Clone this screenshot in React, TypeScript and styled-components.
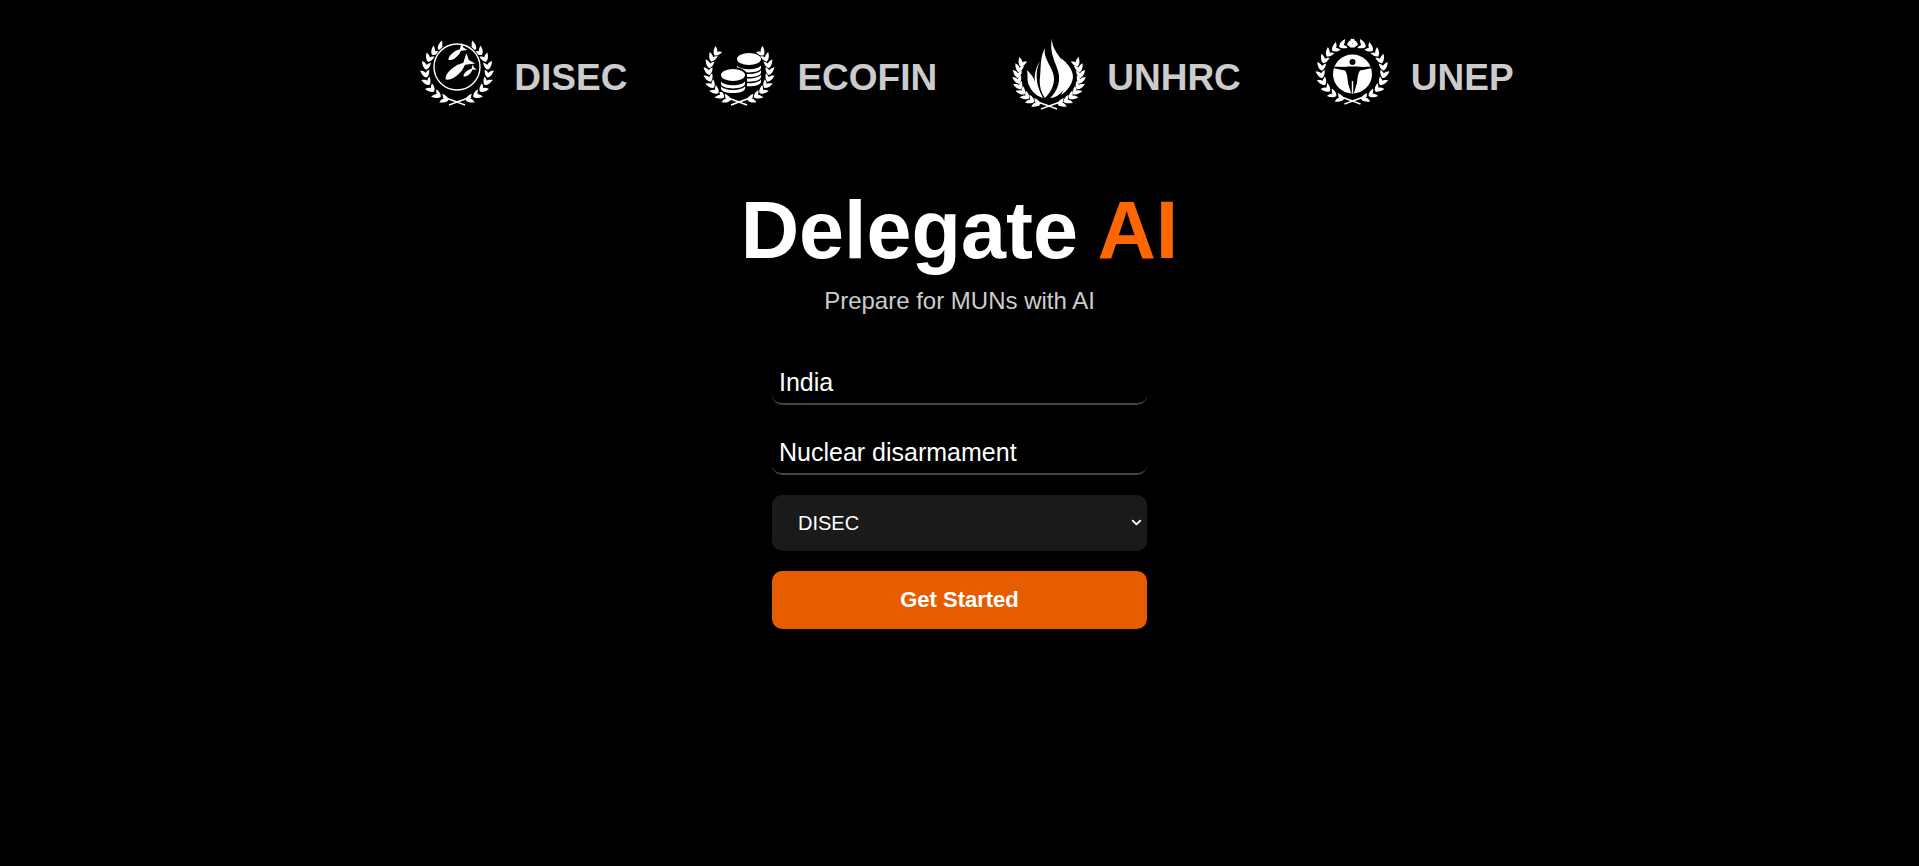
import React from "react";
import styled, { createGlobalStyle } from "styled-components";
import { ChevronDown } from "lucide-react";

const Global = createGlobalStyle`
  html, body { margin: 0; padding: 0; background: #000; }
  body { font-family: "Liberation Sans", Arial, sans-serif; color: #fff; }
`;

const Page = styled.div`
  min-height: 866px;
  background: #000;
  display: flex;
  flex-direction: column;
  align-items: center;
  box-sizing: border-box;
  padding-top: 33px;
`;

const Nav = styled.nav`
  display: flex;
  justify-content: center;
  gap: 74px;
  padding-left: 13px;
`;

const NavItem = styled.a`
  display: flex;
  align-items: center;
  gap: 16px;
  color: #ccc;
  font-size: 37px;
  font-weight: 700;
  text-decoration: none;
`;

const NavLabel = styled.span`
  padding-top: 10px;
`;

const Logo = styled.svg`
  width: 80px;
  height: 80px;
  display: block;
  flex: none;
`;

const Title = styled.h1`
  margin: 69px 0 0;
  font-size: 80.9px;
  line-height: 96px;
  font-weight: 700;
  color: #fff;
`;

const Accent = styled.span`
  color: #ff6600;
`;

const Subtitle = styled.p`
  margin: 9px 0 0;
  font-size: 24px;
  line-height: 28px;
  color: #ccc;
`;

const Form = styled.form`
  width: 375px;
  margin-top: 40px;
  display: flex;
  flex-direction: column;
  gap: 20px;
`;

const TextField = styled.input`
  box-sizing: border-box;
  width: 100%;
  height: 50px;
  padding: 6px 7px 0;
  background: #000;
  border: none;
  border-bottom: 2px solid #444;
  border-radius: 10px;
  color: #fff;
  font: 400 25px "Liberation Sans", Arial, sans-serif;
  outline: none;
`;

const SelectBox = styled.div`
  position: relative;
  height: 56px;
`;

const Select = styled.select`
  box-sizing: border-box;
  display: block;
  width: 100%;
  height: 100%;
  padding: 0 20px 0 26px;
  appearance: none;
  background: #1a1a1a;
  border: none;
  border-radius: 10px;
  color: #fff;
  font: 400 20px "Liberation Sans", Arial, sans-serif;
  outline: none;
`;

const SelectArrow = styled(ChevronDown)`
  position: absolute;
  right: 3px;
  top: 20px;
  width: 15px;
  height: 15px;
  color: #fff;
  stroke-width: 3;
  pointer-events: none;
`;

const Button = styled.button`
  box-sizing: border-box;
  width: 100%;
  height: 58px;
  background: #e65c00;
  border: none;
  border-radius: 10px;
  color: #fff;
  font: 700 22px "Liberation Sans", Arial, sans-serif;
`;

const leaf = (l: number, w: number) =>
  `M0 0 C${l * 0.2} ${-w} ${l * 0.6} ${-w} ${l} 0 C${l * 0.6} ${w * 0.5} ${l * 0.2} ${w * 0.5} 0 0Z`;

type WreathProps = {
  cx: number;
  cy: number;
  rx: number;
  ry: number;
  end?: number;
  steps?: number;
};

/* One laurel branch per side, running from the crossing at the bottom up the ring. */
const Wreath = ({ cx, cy, rx, ry, end = 140, steps = 9 }: WreathProps) => {
  const leaves: React.ReactNode[] = [];
  [1, -1].forEach((side) => {
    for (let i = 0; i < steps; i++) {
      const deg = 16 + (i * (end - 16)) / (steps - 1);
      const a = (deg * Math.PI) / 180;
      const x = cx + side * rx * Math.sin(a);
      const y = cy + ry * Math.cos(a);
      const tangent = Math.atan2(-ry * Math.sin(a), side * rx * Math.cos(a));
      const t = (tangent * 180) / Math.PI;
      const flip = side === 1 ? "" : " scale(1 -1)";
      leaves.push(
        <path
          key={`o${side}${i}`}
          d={leaf(9.5, 3.4)}
          transform={`translate(${x} ${y}) rotate(${t + side * 30})${flip}`}
        />,
        <path
          key={`i${side}${i}`}
          d={leaf(8.5, -3)}
          transform={`translate(${x} ${y}) rotate(${t - side * 30})${flip}`}
        />,
      );
    }
  });
  const by = cy + ry;
  return (
    <g fill="#fff">
      <path
        d={`M${cx + rx * 0.45} ${by - 4} Q${cx} ${by + 1} ${cx - 8} ${by + 4} M${cx - rx * 0.45} ${by - 4} Q${cx} ${by + 1} ${cx + 8} ${by + 4}`}
        fill="none"
        stroke="#fff"
        strokeWidth="1.8"
      />
      {leaves}
    </g>
  );
};

const Bomb = ({ x, y, len, w }: { x: number; y: number; len: number; w: number }) => (
  <path
    transform={`translate(${x} ${y}) rotate(-40)`}
    d={`M0 0 C${len * 0.12} ${-w} ${len * 0.3} ${-w} ${len * 0.55} ${-w * 0.8} L${len * 0.74} ${-w * 0.3} L${len} ${-w * 1.5} L${len * 0.92} 0 L${len} ${w * 1.5} L${len * 0.74} ${w * 0.3} L${len * 0.55} ${w * 0.8} C${len * 0.3} ${w} ${len * 0.12} ${w} 0 0Z`}
  />
);

const DisecLogo = () => (
  <Logo viewBox="0 0 80 80" aria-hidden="true">
    <Wreath cx={39} cy={39} rx={31} ry={29} end={142} />
    <circle cx="39" cy="34" r="24.5" fill="#000" />
    <circle cx="39" cy="34" r="23" fill="#000" stroke="#fff" strokeWidth="1.4" />
    <g fill="#fff">
      <Bomb x={27.5} y={46.5} len={33} w={4.6} />
      <Bomb x={30.5} y={27} len={21} w={3} />
      <Bomb x={45.5} y={43.5} len={15} w={2.2} />
    </g>
  </Logo>
);

const Coins = ({ x, y, n }: { x: number; y: number; n: number }) => {
  const rows = [];
  for (let i = n - 1; i > 0; i--) {
    const oy = y + 4 + i * 4.6;
    rows.push(
      <path
        key={i}
        d={`M${x - 12} ${oy - 2} V${oy} C${x - 12} ${oy + 6.5} ${x + 12} ${oy + 6.5} ${x + 12} ${oy} V${oy - 2} C${x + 8} ${oy + 3} ${x - 8} ${oy + 3} ${x - 12} ${oy - 2}Z`}
        fill="#fff"
      />,
    );
  }
  return (
    <g>
      {rows}
      <ellipse cx={x} cy={y} rx="12" ry="6" fill="#fff" />
    </g>
  );
};

const EcofinLogo = () => (
  <Logo viewBox="0 0 80 80" aria-hidden="true">
    <Wreath cx={38} cy={39} rx={30} ry={29} end={125} />
    <Coins x={48} y={26} n={5} />
    <ellipse cx="32" cy="42" rx="14" ry="8" fill="#000" />
    <rect x="18" y="42" width="28" height="17" fill="#000" />
    <Coins x={32} y={42} n={3} />
  </Logo>
);

const UnhrcLogo = () => (
  <Logo viewBox="0 0 80 80" aria-hidden="true">
    <Wreath cx={38} cy={44} rx={31} ry={28} end={112} />
    <g fill="#fff">
      <path d="M41 5 C40 15 48 22 55 33 C61 43 58 55 46 63 C44 64 41 65 39 65 C47 58 50 47 47 38 C44 28 38 19 41 5Z" />
      <path d="M34 15 C32 24 39 31 42 40 C45 49 41 58 34 65 C30 60 28 52 29 44 C30 33 29 24 34 15Z" />
      <path d="M29 28 C25 36 25 45 27 53 C28 57 30 61 32 65 C25 63 20 58 17 50 C16 46 17 42 16 37 C20 41 23 45 24 49 C23 42 25 34 29 28Z" />
      <path d="M50 25 C55 29 62 36 62 44 C61 52 56 58 50 62 C55 53 57 44 54 36 C53 33 51 29 50 25Z" />
    </g>
  </Logo>
);

const UnepLogo = () => (
  <Logo viewBox="0 0 80 80" aria-hidden="true">
    <Wreath cx={37.5} cy={39} rx={31} ry={28} end={170} steps={11} />
    <circle cx="37.5" cy="41" r="21" fill="#000" />
    <circle cx="37.5" cy="41" r="19.5" fill="#fff" />
    <g fill="#000">
      <circle cx="37.5" cy="29" r="3" />
      <path d="M18 33.5 C25 34 30 34 33 33.5 L42 33.5 C45 34 50 34 57 33.5 L57 35 C52 36 48 37 45 37.5 C43 40 42.5 44 42 50 L39 60 L38.2 60 L38.2 48 L36.8 48 L36.8 60 L36 60 L33 50 C32.5 44 32 40 30 37.5 C27 37 23 36 18 35Z" />
    </g>
  </Logo>
);

const items = [
  { name: "DISEC", logo: <DisecLogo /> },
  { name: "ECOFIN", logo: <EcofinLogo /> },
  { name: "UNHRC", logo: <UnhrcLogo /> },
  { name: "UNEP", logo: <UnepLogo /> },
];

export default function App() {
  return (
    <Page>
      <Global />
      <Nav>
        {items.map((item) => (
          <NavItem key={item.name}>
            {item.logo}
            <NavLabel>{item.name}</NavLabel>
          </NavItem>
        ))}
      </Nav>
      <Title>
        Delegate <Accent>AI</Accent>
      </Title>
      <Subtitle>Prepare for MUNs with AI</Subtitle>
      <Form onSubmit={(e) => e.preventDefault()}>
        <TextField defaultValue="India" />
        <TextField defaultValue="Nuclear disarmament" />
        <SelectBox>
          <Select defaultValue="DISEC">
            {items.map((item) => (
              <option key={item.name}>{item.name}</option>
            ))}
          </Select>
          <SelectArrow />
        </SelectBox>
        <Button type="submit">Get Started</Button>
      </Form>
    </Page>
  );
}
